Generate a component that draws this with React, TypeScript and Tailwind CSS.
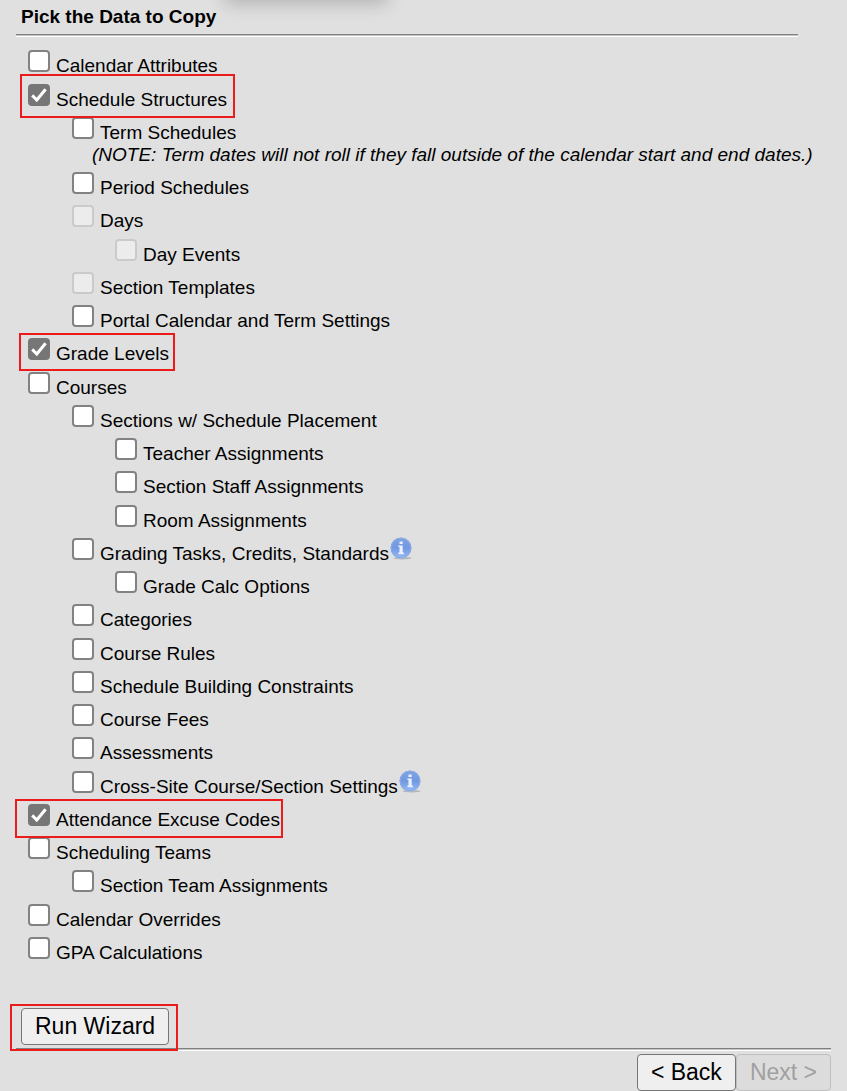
import { useState } from 'react';

type Level = 1 | 2 | 3;

interface CopyOption {
  id: string;
  label: string;
  level: Level;
  note?: string;
  info?: boolean;
  disabled?: boolean;
  highlight?: string;
}

const OPTIONS: CopyOption[] = [
  { id: 'calendarAttributes', label: 'Calendar Attributes', level: 1 },
  { id: 'scheduleStructures', label: 'Schedule Structures', level: 1, highlight: '-left-2 -right-2 -top-[10px] -bottom-[7px]' },
  {
    id: 'termSchedules',
    label: 'Term Schedules',
    level: 2,
    note: '(NOTE: Term dates will not roll if they fall outside of the calendar start and end dates.)',
  },
  { id: 'periodSchedules', label: 'Period Schedules', level: 2 },
  { id: 'days', label: 'Days', level: 2, disabled: true },
  { id: 'dayEvents', label: 'Day Events', level: 3, disabled: true },
  { id: 'sectionTemplates', label: 'Section Templates', level: 2, disabled: true },
  { id: 'portalSettings', label: 'Portal Calendar and Term Settings', level: 2 },
  { id: 'gradeLevels', label: 'Grade Levels', level: 1, highlight: '-left-[9px] -right-[6px] -top-[5px] -bottom-[6px]' },
  { id: 'courses', label: 'Courses', level: 1 },
  { id: 'sections', label: 'Sections w/ Schedule Placement', level: 2 },
  { id: 'teachers', label: 'Teacher Assignments', level: 3 },
  { id: 'staff', label: 'Section Staff Assignments', level: 3 },
  { id: 'rooms', label: 'Room Assignments', level: 3 },
  { id: 'gradingTasks', label: 'Grading Tasks, Credits, Standards', level: 2, info: true },
  { id: 'gradeCalc', label: 'Grade Calc Options', level: 3 },
  { id: 'categories', label: 'Categories', level: 2 },
  { id: 'courseRules', label: 'Course Rules', level: 2 },
  { id: 'constraints', label: 'Schedule Building Constraints', level: 2 },
  { id: 'courseFees', label: 'Course Fees', level: 2 },
  { id: 'assessments', label: 'Assessments', level: 2 },
  { id: 'crossSite', label: 'Cross-Site Course/Section Settings', level: 2, info: true },
  { id: 'excuseCodes', label: 'Attendance Excuse Codes', level: 1, highlight: '-left-[13px] -right-[3px] -top-[5px] -bottom-[7px]' },
  { id: 'schedulingTeams', label: 'Scheduling Teams', level: 1 },
  { id: 'sectionTeams', label: 'Section Team Assignments', level: 2 },
  { id: 'calendarOverrides', label: 'Calendar Overrides', level: 1 },
  { id: 'gpa', label: 'GPA Calculations', level: 1 },
];

const INDENT: Record<Level, string> = {
  1: 'pl-3',
  2: 'pl-14',
  3: 'pl-[99px]',
};

function InfoIcon() {
  return (
    <svg viewBox="0 0 22 24" className="w-[22px] h-6 shrink-0" aria-hidden="true">
      <defs>
        <linearGradient id="infoFill" x1="0" y1="0" x2="0" y2="1">
          <stop offset="0" stopColor="#7fa3e0" />
          <stop offset="0.5" stopColor="#7199e0" />
          <stop offset="1" stopColor="#98bbf5" />
        </linearGradient>
      </defs>
      <ellipse cx="12.5" cy="21.2" rx="9" ry="1.2" fill="#b4b6ba" />
      <circle cx="11" cy="11" r="10.5" fill="url(#infoFill)" />
      <circle cx="11" cy="11" r="9.8" fill="none" stroke="#8aabe8" strokeWidth="1" />
      <path d="M9.5 4.4h3.2v2.6H9.5zM8.4 8.4h4.3v7.2h1.2v1.6H8.4v-1.6h1.1v-5.6H8.4z" fill="#eaf1fd" />
    </svg>
  );
}

function Divider() {
  return (
    <div className="border-t border-[#808080]">
      <div className="h-px bg-[#c4c4c4]" />
      <div className="h-px bg-white" />
    </div>
  );
}

export default function App() {
  const [selected, setSelected] = useState<string[]>(['scheduleStructures', 'gradeLevels', 'excuseCodes']);

  const toggle = (id: string) => {
    setSelected((prev) => (prev.includes(id) ? prev.filter((s) => s !== id) : [...prev, id]));
  };

  return (
    <div className="relative overflow-hidden min-h-screen bg-[#e0e0e0] px-4 font-['Liberation_Sans',Arial,sans-serif] text-[19px] leading-[22px] text-black">
      {/* Shadow of the toolbar above */}
      <div className="absolute left-[228px] -top-5 w-[156px] h-5 shadow-[0_0_18px_4px_rgba(0,0,0,0.2)]" />

      <div className="mr-[33px]">
        <h1 className="py-[6px] pl-[5px] font-bold">Pick the Data to Copy</h1>
        <Divider />
      </div>

      <ul className="pt-[13px]">
        {OPTIONS.map((o) => (
          <li key={o.id} className={`pb-[6px] nth-[4n+1]:mb-px ${INDENT[o.level]}`}>
            <div className="flex items-start gap-px">
              <label htmlFor={o.id} className="relative flex items-start gap-[6px]">
                <span className="grid shrink-0">
                  <input
                    id={o.id}
                    type="checkbox"
                    checked={selected.includes(o.id)}
                    disabled={o.disabled}
                    onChange={() => toggle(o.id)}
                    className="peer col-start-1 row-start-1 size-[22px] appearance-none rounded-[4px] border-2 border-[#828282] bg-white checked:border-[#767676] checked:bg-[#767676] disabled:border-[#cacaca] disabled:bg-[#ececec]"
                  />
                  <svg
                    viewBox="0 0 22 22"
                    className="hidden peer-checked:block col-start-1 row-start-1 size-[22px] pointer-events-none"
                    aria-hidden="true"
                  >
                    <path d="M4.2 11.4 8.8 16 17.6 5.2" fill="none" stroke="#fff" strokeWidth="3" />
                  </svg>
                </span>
                <span className="pt-[5px]">{o.label}</span>
                {o.highlight && (
                  <span className={`absolute z-10 border-2 border-[#ed1c1c] pointer-events-none ${o.highlight}`} />
                )}
              </label>
              {o.info && (
                <button type="button" aria-label={`About ${o.label}`} className="h-[26px] -mt-[2px]">
                  <InfoIcon />
                </button>
              )}
            </div>
            {o.note && <p className="pl-5 italic">{o.note}</p>}
          </li>
        ))}
      </ul>

      <div className="pt-[38px] pb-[3px] pl-[5px]">
        <div className="relative w-fit">
          <button
            type="button"
            className="block h-[37px] rounded-[4px] border border-[#767676] bg-[#efefef] px-[13px] pb-[2px] text-[23px]"
          >
            Run Wizard
          </button>
          <span className="absolute z-10 -left-[11px] -right-[9px] -top-1 -bottom-[6px] border-2 border-[#ed1c1c] pointer-events-none" />
        </div>
      </div>
      <Divider />
      <div className="flex justify-end pt-[3px]">
        <button
          type="button"
          className="h-[37px] rounded-[4px] border border-[#767676] bg-[#efefef] px-[13px] pb-[2px] text-[23px]"
        >
          &lt; Back
        </button>
        <button
          type="button"
          disabled
          className="h-[37px] rounded-[4px] border border-[#bfbfbf] bg-[#dcdcdc] px-[13px] pb-[2px] text-[23px] text-[#a0a0a0]"
        >
          Next &gt;
        </button>
      </div>
    </div>
  );
}
